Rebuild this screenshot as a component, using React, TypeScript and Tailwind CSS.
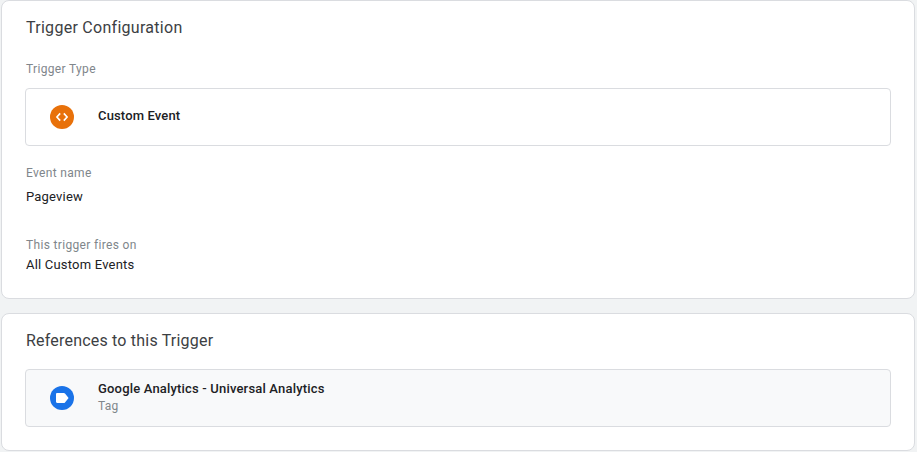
import React from 'react';

const Label = ({ className, children }: { className: string; children: React.ReactNode }) => (
  <div className={`text-[12px] leading-4 tracking-[0.33px] text-[#80868b] ${className}`}>{children}</div>
);

const Value = ({ className, children }: { className: string; children: React.ReactNode }) => (
  <div className={`text-[13px] leading-4 tracking-[0.2px] text-[#202124] ${className}`}>{children}</div>
);

export default function App() {
  return (
    <div className="font-['Roboto',sans-serif] w-[917px] h-[452px] overflow-hidden bg-[#f1f3f4] pl-px pr-[2px] flex flex-col gap-[14px]">
      <div className="h-[299px] shrink-0 bg-white border border-[#dadce0] rounded-lg px-6 pt-[17px]">
        <h2 className="text-[16px] leading-5 tracking-[0.28px] text-[#3c4043]">Trigger Configuration</h2>
        <Label className="mt-[23px]">Trigger Type</Label>
        <div className="mt-[11px] -mx-px h-[58px] border border-[#dadce0] rounded flex items-center">
          <div className="w-6 h-6 ml-6 rounded-full bg-[#e8710a] flex items-center justify-center">
            <svg width="14" height="14" viewBox="0 0 14 14" fill="none" stroke="white" strokeWidth="1.6">
              <path d="M5.2 3.400 L1.900 7 L5.200 10.600 M8.800 3.400 L12.100 7 L8.800 10.600" />
            </svg>
          </div>
          <div className="ml-6 pb-[2px] text-[13px] tracking-[0.14px] font-medium text-[#202124]">Custom Event</div>
        </div>
        <Label className="mt-[19px]">Event name</Label>
        <Value className="mt-2">Pageview</Value>
        <Label className="mt-[32px]">This trigger fires on</Label>
        <Value className="mt-1">All Custom Events</Value>
      </div>
      <div className="h-[138px] shrink-0 bg-white border border-[#dadce0] rounded-lg px-6 pt-[17px]">
        <h2 className="text-[16px] leading-5 tracking-[0.2px] text-[#3c4043]">References to this Trigger</h2>
        <div className="mt-[18px] -mx-px h-[58px] border border-[#dadce0] bg-[#f8f9fa] rounded flex items-center">
          <div className="w-6 h-6 ml-6 rounded-full bg-[#1a73e8] flex items-center justify-center">
            <svg width="14" height="14" viewBox="0 0 14 14" fill="white">
              <path d="M2.200 2h6.600c.5 0 .9.2 1.200.6L13.600 7 10 11.400c-.3.4-.7.6-1.200.6H2.200C1.500 12 1 11.500 1 10.800V3.200C1 2.500 1.500 2 2.200 2z" />
            </svg>
          </div>
          <div className="ml-6 pb-[2px]">
            <div className="text-[13px] leading-4 tracking-[0.18px] font-medium text-[#202124]">Google Analytics - Universal Analytics</div>
            <div className="mt-px text-[12px] leading-4 tracking-[0.2px] text-[#80868b]">Tag</div>
          </div>
        </div>
      </div>
    </div>
  );
}
